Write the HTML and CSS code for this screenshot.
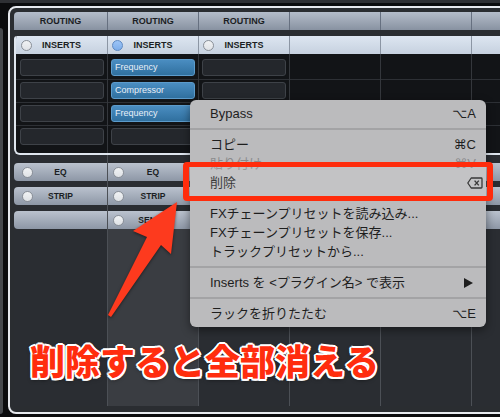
FILE: index.html
```html
<!DOCTYPE html>
<html lang="ja">
<head>
<meta charset="utf-8">
<title>Mixer</title>
<link rel="stylesheet" href="styles.css">
</head>
<body>
<div class="topbar"></div>
<div class="main">
  <div class="side"></div>
  <div class="panel">
    <div class="hrow">
      <div class="hcell first">ROUTING</div>
      <div class="hcell">ROUTING</div>
      <div class="hcell">ROUTING</div>
      <div class="hcell"></div>
      <div class="hcell"></div>
      <div class="hcell"></div>
    </div>
    <div class="inserts">
      <div class="irow">
        <div class="icell first"><span class="radio"></span><span class="lbl">INSERTS</span></div>
        <div class="icell"><span class="radio on"></span><span class="lbl">INSERTS</span></div>
        <div class="icell"><span class="radio"></span><span class="lbl">INSERTS</span></div>
        <div class="icell"></div>
        <div class="icell"></div>
        <div class="icell"></div>
      </div>
      <div class="slots">
        <div class="scol first">
          <div class="srow"><div class="slot"></div></div>
          <div class="srow"><div class="slot"></div></div>
          <div class="srow"><div class="slot"></div></div>
          <div class="srow"><div class="slot"></div></div>
        </div>
        <div class="scol">
          <div class="srow"><div class="slot fx">Frequency</div></div>
          <div class="srow"><div class="slot fx">Compressor</div></div>
          <div class="srow"><div class="slot fx">Frequency</div></div>
          <div class="srow"><div class="slot"></div></div>
        </div>
        <div class="scol">
          <div class="srow"><div class="slot"></div></div>
          <div class="srow"><div class="slot"></div></div>
          <div class="srow"><div class="slot"></div></div>
          <div class="srow"><div class="slot"></div></div>
        </div>
        <div class="scol">
          <div class="srow"></div><div class="srow"></div><div class="srow"></div><div class="srow"></div>
        </div>
        <div class="scol">
          <div class="srow"></div><div class="srow"></div><div class="srow"></div><div class="srow"></div>
        </div>
        <div class="scol">
          <div class="srow"></div><div class="srow"></div><div class="srow"></div><div class="srow"></div>
        </div>
      </div>
    </div>
    <div class="lower">
      <div class="lcol first">
        <div class="bands">
          <div class="band"><span class="radio"></span><span class="blbl">EQ</span></div>
          <div class="band"><span class="radio"></span><span class="blbl">STRIP</span></div>
          <div class="band"></div>
        </div>
        <div class="fill"></div>
      </div>
      <div class="lcol sel">
        <div class="bands">
          <div class="band"><span class="radio"></span><span class="blbl">EQ</span></div>
          <div class="band"><span class="radio"></span><span class="blbl">STRIP</span></div>
          <div class="band"><span class="radio"></span><span class="blbl">SENDS</span></div>
        </div>
        <div class="fill"></div>
      </div>
      <div class="lcol">
        <div class="bands">
          <div class="band"><span class="radio"></span><span class="blbl">EQ</span></div>
          <div class="band"><span class="radio"></span><span class="blbl">STRIP</span></div>
          <div class="band"><span class="radio"></span><span class="blbl">SENDS</span></div>
        </div>
        <div class="fill"></div>
      </div>
      <div class="lcol">
        <div class="bands"><div class="band"></div><div class="band"></div><div class="band"></div></div>
        <div class="fill"></div>
      </div>
      <div class="lcol">
        <div class="bands"><div class="band"></div><div class="band"></div><div class="band"></div></div>
        <div class="fill"></div>
      </div>
      <div class="lcol">
        <div class="bands"><div class="band"></div><div class="band"></div><div class="band"></div></div>
        <div class="fill"></div>
      </div>
    </div>
  </div>
</div>

<div class="menu">
  <div class="mi"><span>Bypass</span><span class="sc">⌥A</span></div>
  <div class="sep"></div>
  <div class="mi"><span>コピー</span><span class="sc">⌘C</span></div>
  <div class="mi dis"><span>貼り付け</span><span class="sc">⌘V</span></div>
  <div class="mi"><span>削除</span><svg class="delkey" width="16" height="12" viewBox="0 0 16 12"><path d="M4.2 1 H14.2 Q15 1 15 1.8 V10.2 Q15 11 14.2 11 H4.2 L0.8 6 Z" fill="none" stroke="#1e1e1e" stroke-width="1.3" stroke-linejoin="round"/><path d="M7.6 3.6 L11.8 8.4 M11.8 3.6 L7.6 8.4" stroke="#1e1e1e" stroke-width="1.4"/></svg></div>
  <div class="sep"></div>
  <div class="mi"><span>FXチェーンプリセットを読み込み...</span></div>
  <div class="mi"><span>FXチェーンプリセットを保存...</span></div>
  <div class="mi"><span>トラックプリセットから...</span></div>
  <div class="sep"></div>
  <div class="mi"><span>Inserts を &lt;プラグイン名&gt; で表示</span><svg class="tri" width="9" height="10" viewBox="0 0 9 10"><path d="M0 0 L9 5 L0 10 Z" fill="#1e1e1e"/></svg></div>
  <div class="sep"></div>
  <div class="mi"><span>ラックを折りたたむ</span><span class="sc">⌥E</span></div>
</div>

<div class="redbox"></div>

<svg class="arrow" width="500" height="417" viewBox="0 0 500 417">
  <polygon points="177,202 133,231 147,237 108,315 111,317 161,245 171,254" fill="#fd3a1e"/>
</svg>

<div class="caption">削除すると全部消える</div>
</body>
</html>
```

FILE: styles.css
```css
* { box-sizing: border-box; }

body {
  margin: 0;
  width: 500px;
  height: 417px;
  overflow: hidden;
  position: relative;
  background: #0b0c0e;
  font-family: "Liberation Sans", Arial, sans-serif;
}

.topbar {
  height: 3px;
  background: #2e3034;
}

.main {
  display: flex;
  gap: 5px;
  margin-top: 3px;
}

.side {
  flex: none;
  width: 3px;
  height: 386px;
  margin-top: 22px;
  background: #46494d;
  border-radius: 0 3px 3px 0;
}

.panel {
  flex: none;
  width: 570px;
  border: 2px solid #e6e9ee;
  border-radius: 8px;
  background: #2a2d31;
  padding: 4px 0 4px 4px;
}

/* header row */
.hrow {
  display: flex;
  height: 18px;
}

.hcell {
  flex: none;
  width: 91px;
  border-left: 1px solid #667080;
  background: linear-gradient(#b4bdca, #8892a1);
  font: bold 9px/18px "Liberation Sans", Arial, sans-serif;
  color: #1b1e23;
  text-align: center;
}

.hcell.first {
  width: 93px;
  border-left: none;
  border-top-left-radius: 4px;
}

/* inserts block */
.inserts {
  margin-top: 6px;
  border-left: 2px solid #dfe6ef;
  border-bottom: 2px solid #dfe6ef;
  border-radius: 3px 0 0 6px;
  background: #121417;
  overflow: hidden;
}

.irow {
  display: flex;
  height: 18px;
}

.icell {
  flex: none;
  width: 91px;
  border-left: 1px solid #8c96a4;
  background: linear-gradient(#dde6f1, #c6d1df);
  display: grid;
  grid-template-columns: 1fr auto 1fr;
  align-items: center;
}

.icell.first {
  border-left: none;
}

.icell .radio { margin-left: 4px; }
.icell.first .radio { margin-left: 5px; }

.radio {
  display: block;
  width: 11px;
  height: 11px;
  border-radius: 50%;
  background: linear-gradient(#f0f2f4, #dfe2e6);
  border: 1px solid #8a9098;
}

.radio.on {
  background: linear-gradient(#9cc4f6, #7eaeea);
  border-color: #5d89c2;
}

.lbl, .blbl {
  font: bold 9px/1 "Liberation Sans", Arial, sans-serif;
  color: #1b1e23;
  white-space: nowrap;
}

.blbl { font-size: 8.5px; }

.slots {
  display: flex;
}

.scol {
  flex: none;
  width: 91px;
  border-left: 1px solid #34373c;
  padding: 3px 0 5px;
}

.scol.first {
  border-left: none;
}

.srow {
  height: 23px;
  padding: 2px 0 3px;
  border-bottom: 1px solid #2d3035;
}

.srow:last-child {
  height: 22px;
  border-bottom: none;
}

.slot {
  height: 17px;
  margin: 0 3px 0 3px;
  border: 1px solid #3e4248;
  border-radius: 3px;
  background: #24272c;
  font: 9px/15px "Liberation Sans", Arial, sans-serif;
  color: #e8eff7;
  padding-left: 3px;
}

.scol.first .slot { margin-left: 4px; }

.slot.fx {
  background: linear-gradient(#4a8dc1, #30709f);
  border-color: #5c9bcb;
}

/* lower part */
.lower {
  display: flex;
}

.lcol {
  flex: none;
  width: 91px;
  height: 251px;
  border-left: 1px solid #4c5056;
  display: flex;
  flex-direction: column;
  background: #2a2d32;
}

.lcol.first {
  width: 93px;
  border-left: none;
}

.bands {
  display: flex;
  flex-direction: column;
  gap: 6px;
  padding-top: 8px;
}

.band {
  height: 18px;
  background: linear-gradient(#bac2ce, #8d97a6);
  display: grid;
  grid-template-columns: 1fr auto 1fr;
  align-items: center;
}

.band .radio { margin-left: 5px; }
.lcol.first .band { border-radius: 4px 0 0 4px; }
.lcol.first .band .radio { margin-left: 8px; }

.fill {
  flex: 1;
}

.lcol.sel .fill {
  background: #3a3d42;
}

/* context menu */
.menu {
  position: absolute;
  left: 190px;
  top: 100px;
  width: 296px;
  padding: 4px 0;
  background: #bbbbbd;
  border-radius: 6px;
  box-shadow: 0 3px 10px rgba(0, 0, 0, 0.45);
  font-family: "Liberation Sans", "Noto Sans CJK JP", sans-serif;
  font-size: 13px;
  color: #1e1e1e;
}

.mi {
  height: 19px;
  line-height: 19px;
  display: flex;
  align-items: center;
  justify-content: space-between;
  padding: 0 10px 0 20px;
  white-space: nowrap;
}

.mi.dis { color: #8b8b8d; }

.sc {
  font-family: "Liberation Sans", "DejaVu Sans", sans-serif;
}

.delkey { margin-right: -7px; }
.tri { margin-right: 3px; }

.sep {
  height: 2px;
  margin: 5px 0;
  background: #a3a3a5;
}

.redbox {
  position: absolute;
  left: 183px;
  top: 162px;
  width: 310px;
  height: 39px;
  border: 5px solid #ff2c0c;
  border-width: 5px 6px;
  border-radius: 4px;
  background: rgba(255, 255, 255, 0.12);
}

.arrow {
  position: absolute;
  left: 0;
  top: 0;
  filter: drop-shadow(0 1px 1.5px rgba(0, 0, 0, 0.5));
}

.caption {
  position: absolute;
  left: 30px;
  top: 342px;
  font-family: "Noto Sans CJK JP", sans-serif;
  font-weight: 900;
  font-size: 35px;
  line-height: 1;
  color: #ff2d0e;
  white-space: nowrap;
  text-shadow:
    2px 0 0 #fff, -2px 0 0 #fff, 0 2px 0 #fff, 0 -2px 0 #fff,
    1.5px 1.5px 0 #fff, -1.5px 1.5px 0 #fff, 1.5px -1.5px 0 #fff, -1.5px -1.5px 0 #fff,
    0 2px 4px rgba(0, 0, 0, 0.6);
}
```
